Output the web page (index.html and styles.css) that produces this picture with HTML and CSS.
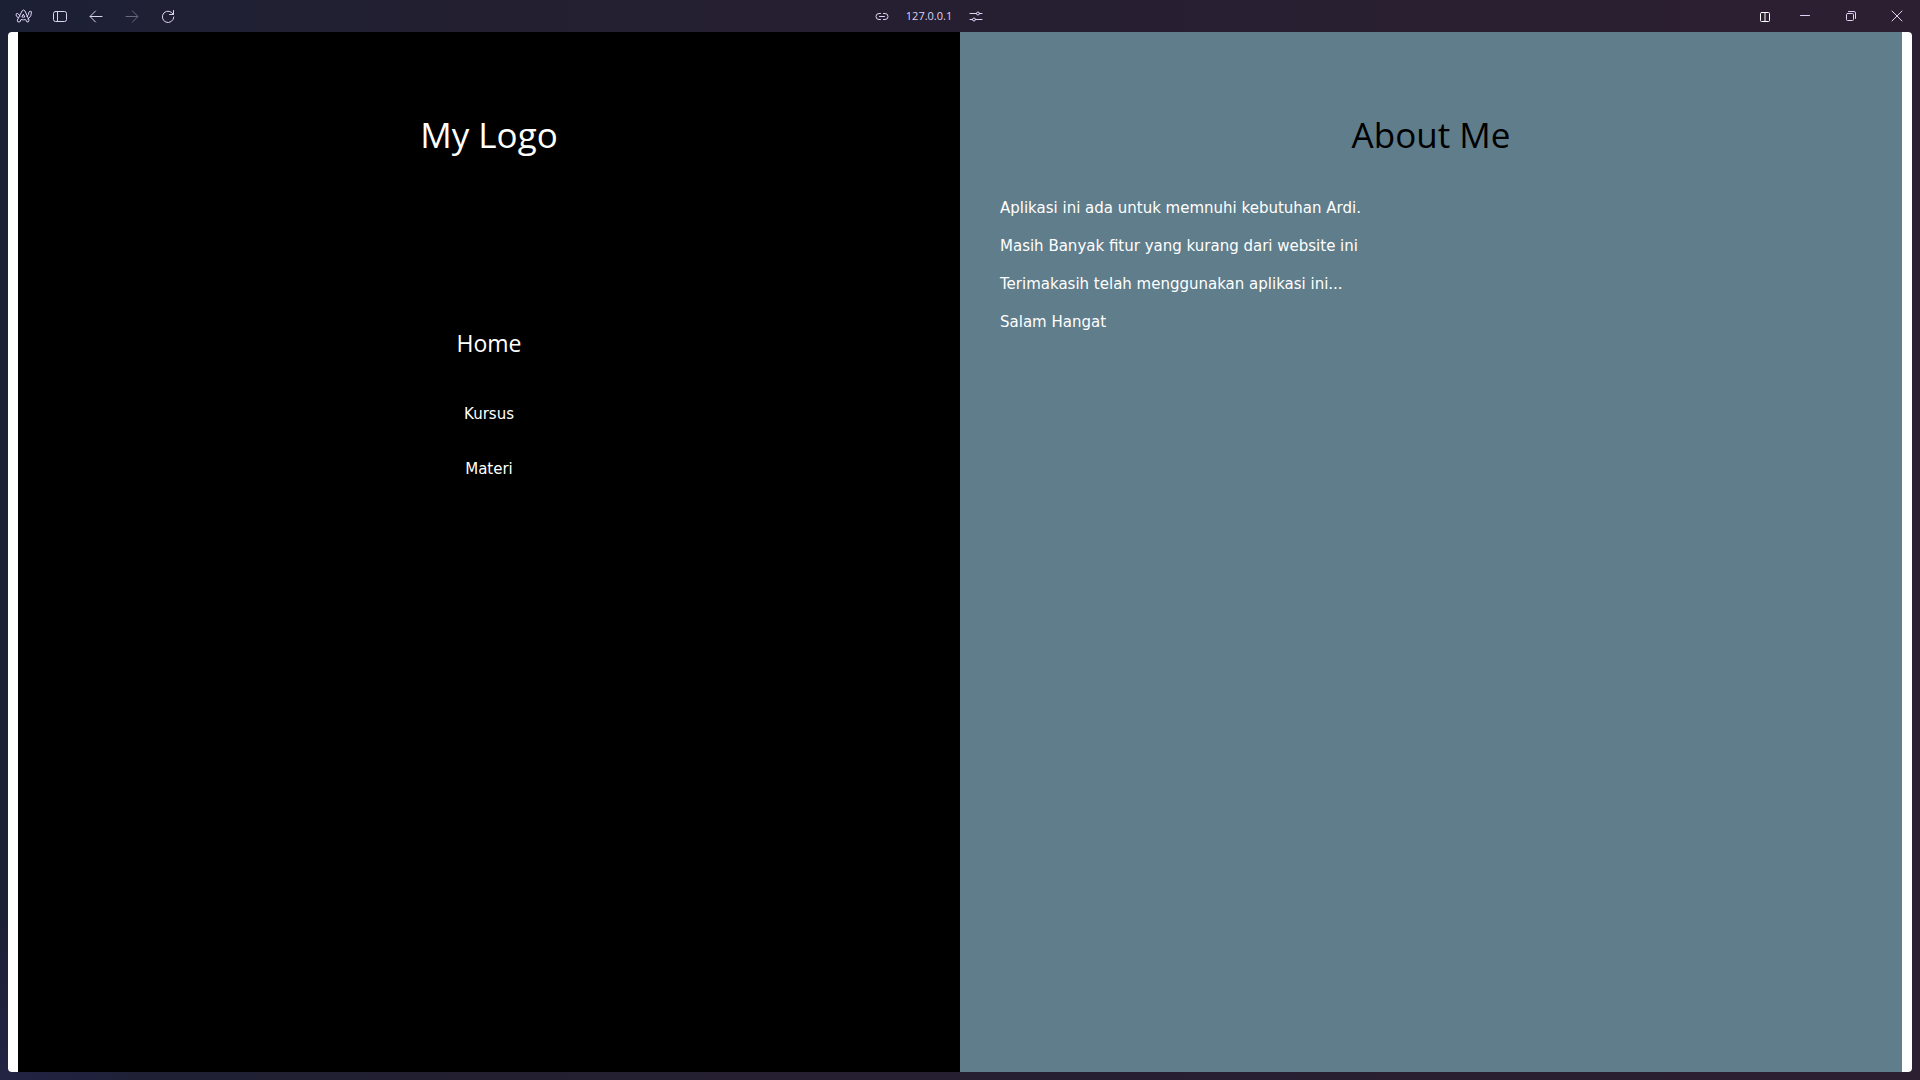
FILE: index.html
```html
<!DOCTYPE html>
<html lang="id">
<head>
<meta charset="utf-8">
<title>About Me</title>
<link rel="stylesheet" href="styles.css">
</head>
<body>
<header class="toolbar">
  <div class="tools">
    <button class="tool" aria-label="Menu"><svg width="18" height="16" viewBox="0 0 18 16"><path d="M3.500 10 7 3q1.500-2 3 0l4 9q0 2.500-2 2l-1.500-2.500q-2.200.8-4.500 0L4.800 14Q2 14.500 2.200 12.500zM7.200 9q1.300.6 2.600 0L8.500 6.500zM3.500 10Q1.500 9 1 7q0-2 1.800-1.500L5 8M12 8.500q1.800-1.500 2-4.500 1-1.500 2.500-.3.500 4.500-3.500 7.500"/></svg></button>
    <button class="tool" aria-label="Sidebar"><svg width="16" height="14" viewBox="0 0 16 14"><rect x="1.5" y="2.5" width="13" height="10" rx="2"/><path d="M5.500 2.500v10"/></svg></button>
    <button class="tool" aria-label="Kembali"><svg width="16" height="14" viewBox="0 0 16 14"><path d="M14 7.500H2.500M7.500 2 2 7.500 7.500 13"/></svg></button>
    <button class="tool" aria-label="Maju" disabled><svg width="16" height="14" viewBox="0 0 16 14"><path d="M2 7.500h11.500M8.500 2 14 7.500 8.500 13"/></svg></button>
    <button class="tool" aria-label="Muat ulang"><svg width="16" height="14" viewBox="0 0 16 14"><path d="M13.300 5.500A5.700 5.700 0 1 0 13.800 8M13.500 1.500v4H9.500"/></svg></button>
  </div>
  <div class="address">
    <button class="tool" aria-label="Salin tautan"><svg width="14" height="10" viewBox="0 0 14 10"><path d="M5.500 2.500H4a3 3 0 0 0 0 6h1.500M8.500 2.500H10a3 3 0 0 1 0 6H8.500M4.500 5.500h5"/></svg></button>
    <span class="url">127.0.0.1</span>
    <button class="tool" aria-label="Pengaturan situs"><svg width="14" height="12" viewBox="0 0 14 12"><path d="M1 3.500h6.500M10.500 3.500H13M1 9.500h2.500M6.500 9.500H13"/><circle cx="9" cy="3.5" r="1.5"/><circle cx="5" cy="9.5" r="1.5"/></svg></button>
  </div>
  <div class="window-controls">
    <button class="control split" aria-label="Tampilan terpisah"><svg width="12" height="12" viewBox="0 0 12 12"><rect x="1.5" y="2.5" width="9" height="9" rx="1"/><path d="M6 2.500v9"/></svg></button>
    <button class="control" aria-label="Kecilkan"><svg width="12" height="12" viewBox="0 0 12 12"><path d="M1.500 5.500h9"/></svg></button>
    <button class="control" aria-label="Pulihkan"><svg width="12" height="12" viewBox="0 0 12 12"><rect x="1.5" y="3.5" width="7" height="7" rx="1"/><path d="M3.500 1.500H9q1.500 0 1.500 1.500v5.500"/></svg></button>
    <button class="control" aria-label="Tutup"><svg width="12" height="12" viewBox="0 0 12 12"><path d="m1 1 10 10M11 1 1 11"/></svg></button>
  </div>
</header>
<div class="page">
  <div class="panel sidebar">
    <h1 class="title">My Logo</h1>
    <nav class="menu">
      <h3 class="menu-title">Home</h3>
      <a class="menu-link" href="#kursus">Kursus</a>
      <a class="menu-link" href="#materi">Materi</a>
    </nav>
  </div>
  <main class="panel about">
    <h1 class="title">About Me</h1>
    <div class="copy">
      <p>Aplikasi ini ada untuk memnuhi kebutuhan Ardi.</p>
      <p>Masih Banyak fitur yang kurang dari website ini</p>
      <p>Terimakasih telah menggunakan aplikasi ini...</p>
      <p>Salam Hangat</p>
    </div>
  </main>
</div>
</body>
</html>
```
FILE: styles.css
```css
* {
  box-sizing: border-box;
}

body {
  display: flex;
  flex-direction: column;
  min-height: 100vh;
  margin: 0;
  padding: 0 8px 8px;
  background:
    radial-gradient(circle at left bottom, #232344, transparent 160px),
    linear-gradient(90deg, #1c2035, #231f31 25%, #271f31 60%, #2c1f31);
  font-family: "DejaVu Sans", Verdana, sans-serif;
  font-size: 15px;
  line-height: 23px;
}

.toolbar {
  display: grid;
  grid-template-columns: 1fr auto 1fr;
  align-items: center;
  height: 32px;
  color: #dcd4f4;
}

.tools,
.address,
.window-controls {
  display: flex;
  align-items: center;
}

.tools {
  gap: 4px;
}

.address {
  gap: 8px;
  padding-right: 62px;
  font: 11px/16px "Open Sans", "Segoe UI", sans-serif;
}

.window-controls {
  justify-content: flex-end;
  margin-right: -8px;
}

.tool,
.control {
  display: grid;
  place-items: center;
  width: 32px;
  height: 32px;
  padding: 0;
  border: 0;
  background: none;
  color: inherit;
}

.control {
  width: 46px;
}

.split {
  width: 34px;
  color: #fff;
}

.tool:disabled {
  opacity: 0.4;
}

svg {
  fill: none;
  stroke: currentColor;
  stroke-width: 1;
  stroke-linecap: round;
  stroke-linejoin: round;
}

.page {
  display: grid;
  grid-template-columns: 1fr 1fr;
  flex: 1;
  padding: 0 10px;
  border-radius: 4px;
  background: #fff;
}

.panel {
  padding: 76px 40px;
  color: #fff;
}

.sidebar {
  background: #000;
  text-align: center;
}

.about {
  background: #607d8b;
}

.title,
.menu-title {
  margin: 0;
  font-family: "Open Sans", "Segoe UI", sans-serif;
  font-weight: 400;
}

.title {
  font-size: 35px;
  line-height: 54px;
  text-align: center;
}

.about .title {
  color: #000;
}

.menu {
  display: flex;
  flex-direction: column;
  align-items: center;
  gap: 32px;
  padding-top: 163px;
}

.menu-title {
  margin-bottom: 10px;
  font-size: 23px;
  line-height: 36px;
}

.menu-link {
  color: inherit;
  text-decoration: none;
}

.copy {
  display: grid;
  gap: 15px;
  padding-top: 35px;
}

.copy p {
  margin: 0;
}
```
